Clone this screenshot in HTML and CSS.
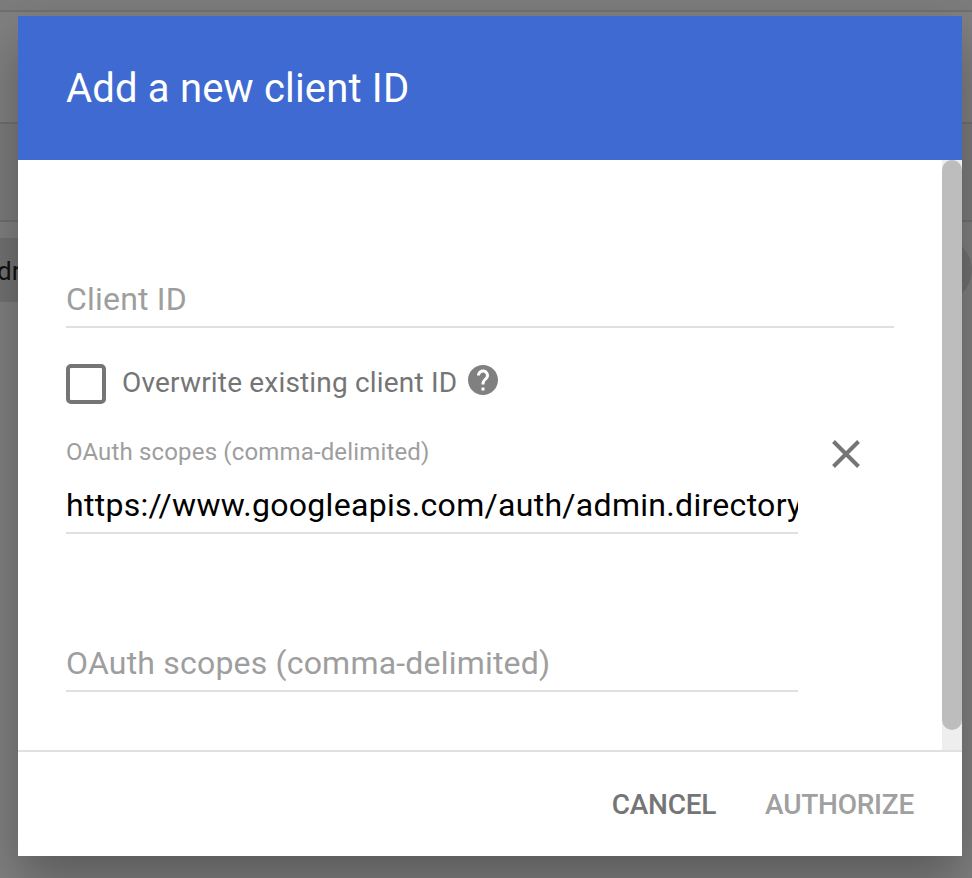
FILE: index.html
```html
<!DOCTYPE html>
<html lang="en">
<head>
<meta charset="utf-8">
<title>Add a new client ID</title>
<link rel="stylesheet" href="styles.css">
</head>
<body>
<div class="backdrop">
  <div class="row row-top"></div>
  <div class="row row-first"></div>
  <div class="row row-second"></div>
  <div class="chips">
    <span class="chip chip-start">dr</span>
    <span class="chip chip-end"></span>
  </div>
</div>
<main class="dialog">
  <header class="dialog-header"><h1>Add a new client ID</h1></header>
  <section class="dialog-body">
    <form class="form">
      <div class="field client-field"><span class="placeholder">Client ID</span></div>
      <div class="check-row">
        <span class="checkbox"></span>
        <span class="check-label">Overwrite existing client ID</span>
        <svg class="help" viewBox="2 2 20 20"><path d="M12 2C6.48 2 2 6.48 2 12s4.480 10 10 10 10-4.480 10-10S17.520 2 12 2zm1 17h-2v-2h2v2zm2.070-7.750l-.9.920C13.450 12.900 13 13.500 13 15h-2v-.5c0-1.100.45-2.100 1.170-2.830l1.240-1.260c.37-.36.59-.86.59-1.410 0-1.100-.9-2-2-2s-2 .9-2 2H8c0-2.210 1.790-4 4-4s4 1.790 4 4c0 .88-.36 1.680-.93 2.250z"/></svg>
      </div>
      <div class="scope-row">
        <div class="scope-col">
          <div class="small-label">OAuth scopes (comma-delimited)</div>
          <div class="field value-field"><span class="value">https://www.googleapis.com/auth/admin.directory</span></div>
        </div>
        <svg class="close" viewBox="0 0 28 28"><path d="M1.500 1.500l25 25M26.500 1.500l-25 25"/></svg>
      </div>
      <div class="field scope-field"><span class="placeholder scope-placeholder">OAuth scopes (comma-delimited)</span></div>
    </form>
    <div class="scrollbar"><div class="thumb"></div></div>
  </section>
  <footer class="dialog-footer">
    <span class="button cancel">CANCEL</span>
    <span class="button authorize">AUTHORIZE</span>
  </footer>
</main>
</body>
</html>
```
FILE: styles.css
```css
* { box-sizing: border-box; }
body {
  margin: 0;
  width: 972px;
  height: 878px;
  overflow: hidden;
  background: #808080;
  font-family: Roboto, "Liberation Sans", sans-serif;
}
.backdrop { position: absolute; inset: 0; overflow: hidden; }
.row { border-bottom: 2px solid #707070; }
.row-top { height: 12px; background: #7c7c7c; }
.row-first { height: 112px; }
.row-second { height: 98px; background: #7c7c7c; }
.chips { display: flex; justify-content: space-between; margin-top: 16px; height: 64px; }
.chip { height: 64px; background: #727272; }
.chip-start { width: 60px; font-size: 26px; line-height: 66px; color: #111; text-indent: -3px; }
.chip-end { width: 64px; border-radius: 32px; }
.dialog {
  position: relative;
  width: 944px;
  height: 840px;
  margin: 16px 0 0 18px;
  display: flex;
  flex-direction: column;
  background: #fff;
  box-shadow: 0 24px 48px rgba(0, 0, 0, .3);
}
.dialog-header { flex: none; height: 144px; padding-left: 48px; background: #3e6ad1; color: #fff; }
h1 { margin: 0; font-size: 40px; font-weight: 400; line-height: 146px; letter-spacing: .18px; white-space: nowrap; }
.dialog-body { height: 590px; display: flex; justify-content: space-between; }
.form { width: 828px; margin-left: 48px; padding-top: 108px; }
.field { border-bottom: 2px solid #e0e0e0; white-space: nowrap; overflow: hidden; }
.client-field { height: 60px; }
.placeholder { display: block; font-size: 32px; line-height: 62px; color: #9e9e9e; letter-spacing: .2px; }
.check-row { display: flex; height: 40px; margin-top: 36px; }
.checkbox { width: 40px; height: 40px; border: 4px solid #757575; border-radius: 5px; }
.check-label { margin-left: 16px; width: 336px; font-size: 28px; line-height: 37px; color: #757575; letter-spacing: .18px; white-space: nowrap; }
.help { width: 30px; height: 30px; margin: 1px 0 0 10px; fill: #808080; }
.scope-row { display: flex; height: 130px; }
.scope-col { width: 732px; padding-top: 32px; }
.small-label { height: 32px; font-size: 24px; line-height: 32px; letter-spacing: .16px; color: #9e9e9e; white-space: nowrap; }
.value-field { height: 66px; }
.value { display: block; font-size: 32px; line-height: 74px; color: #000; letter-spacing: .3px; }
.close { width: 28px; height: 28px; margin: 36px 0 0 34px; fill: none; stroke: #757575; stroke-width: 4; }
.scope-field { width: 732px; height: 60px; margin-top: 98px; }
.scrollbar { width: 20px; background: #eee; }
.thumb { height: 570px; border-radius: 10px; background: #bdbdbd; }
.dialog-footer {
  flex: none;
  height: 106px;
  border-top: 2px solid #e0e0e0;
  padding-right: 48px;
  display: flex;
  justify-content: flex-end;
  gap: 49px;
}
.button { font-size: 28px; font-weight: 500; line-height: 106px; letter-spacing: -.25px; }
.cancel { color: #757575; }
.authorize { color: #a0a0a0; }
```
